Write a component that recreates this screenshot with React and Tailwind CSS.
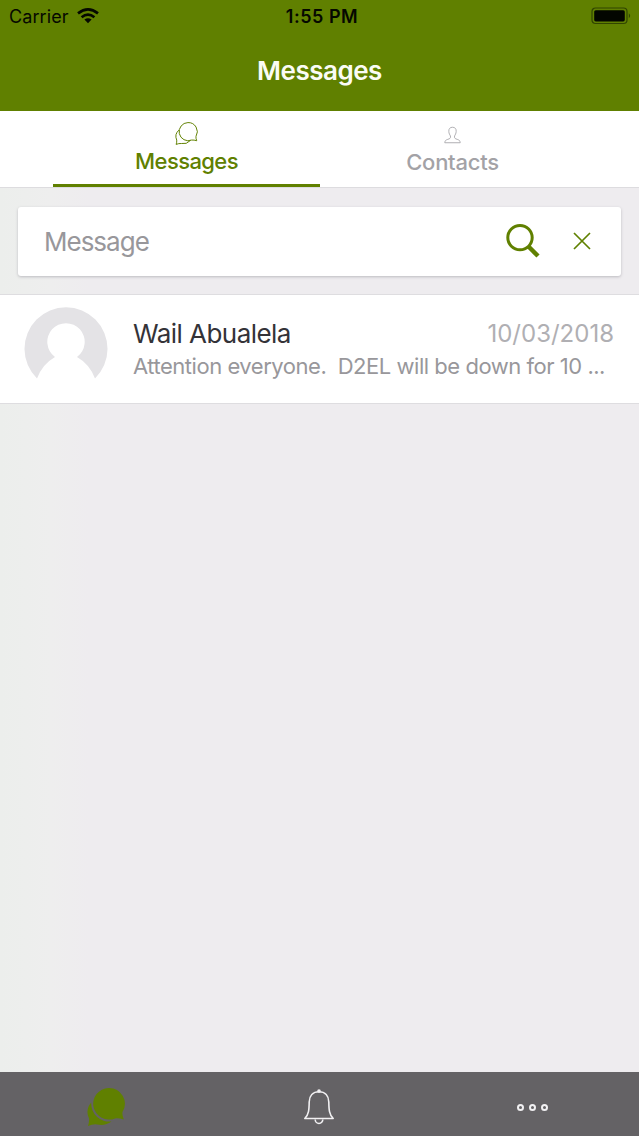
import React, { useState } from "react";

const ChatIcon = ({ filled, className }) => (
  <svg viewBox="0 0 40 40" className={className} fill={filled ? "currentColor" : "none"} stroke={filled ? "none" : "currentColor"} strokeWidth="1.7" strokeLinejoin="round">
    {filled ? (
      <>
        <path d="M22.5 1A15.8 15.8 0 1 0 29 31.4Q33 31 37.8 32.6Q36 28 36.5 25A15.8 15.8 0 0 0 22.5 1Z" />
        <path d="M5.2 15.5A15 15 0 0 0 3 31.5Q3.4 35 2 39Q6.5 37 11 37.4Q19 39.2 25.5 34.4A18 18 0 0 1 5.2 15.5Z" />
      </>
    ) : (
      <>
        <path d="M22.5 1A15.8 15.8 0 1 0 29 31.4Q33 31 37.8 32.6Q36 28 36.5 25A15.8 15.8 0 0 0 22.5 1Z" />
        <path d="M7 14A15 15 0 0 0 3 31.5Q3.4 35 2 39Q6.5 37 11 37.4Q20 39.5 27 32" />
      </>
    )}
  </svg>
);

const PersonIcon = () => (
  <svg viewBox="0 0 18 18" className="mr-px h-[18px] w-[17px]" fill="none" stroke="currentColor" strokeWidth="0.9" strokeLinejoin="round">
    <path d="M9 .8C6.3.8 4.9 2.5 5.1 5.2C5.2 7.6 6.2 8.8 6.8 10C7.4 12.2 6.2 13 4 13.6C1.8 14.3 1.1 15 .8 17.2H17.2C16.9 15 16.2 14.3 14 13.6C11.8 13 10.6 12.2 11.2 10C11.8 8.8 12.8 7.6 12.9 5.2C13.1 2.5 11.7.8 9 .8Z" />
  </svg>
);

const WifiIcon = () => (
  <svg viewBox="0 0 22 16" className="h-4 w-[22px]" fill="none" stroke="currentColor" strokeWidth="2.7">
    <path d="M1 5.4Q11-2.5 21 5.4M4.6 9.2Q11 4.2 17.4 9.2" />
    <path d="M7.4 11.6Q11 8.7 14.6 11.6L11 15.2Z" fill="currentColor" stroke="none" />
  </svg>
);

const BatteryIcon = () => (
  <svg viewBox="0 0 40 18" className="h-[18px] w-10">
    <rect x="1" y="1" width="35" height="15.5" rx="3.5" fill="none" stroke="#314500" strokeWidth="1.2" />
    <rect x="3.2" y="3.2" width="30.6" height="11.2" rx="1.6" fill="#030600" />
    <path d="M37.8 6.3Q40.5 8.8 37.8 11.3Z" fill="#314500" />
  </svg>
);

const BellIcon = () => (
  <svg viewBox="0 0 32 36" className="h-9 w-8" fill="none" stroke="currentColor" strokeWidth="1.6" strokeLinejoin="round">
    <path d="M16 2.7C9.8 2.7 6.3 7 6.2 13C6.1 20.5 5.8 25.5 1.8 29.5H30.2C26.2 25.5 25.9 20.5 25.8 13C25.7 7 22.2 2.7 16 2.7Z" />
    <path d="M12.2 30.4A3.8 4.1 0 0 0 19.8 30.4" />
    <circle cx="16" cy="2.1" r="1.8" fill="currentColor" stroke="none" />
  </svg>
);

const App = () => {
  const [query, setQuery] = useState("");

  return (
    <div className="flex h-[1136px] w-[639px] flex-col overflow-hidden bg-[linear-gradient(90deg,#eceeec_0px,#eeeeee_50px,#eeecef_90px)] font-['Inter',sans-serif]">
      <header className="h-[111px] bg-[#608000] text-[#050800]">
        <div className="grid h-8 grid-cols-3 items-center pr-2 pl-[9px]">
          <div className="flex items-center gap-2">
            <span className="text-[18px] tracking-[0.1px]">Carrier</span>
            <WifiIcon />
          </div>
          <span className="pl-1 text-center text-[18px] font-semibold tracking-[0.5px]">1:55 PM</span>
          <div className="flex justify-end">
            <BatteryIcon />
          </div>
        </div>
        <h1 className="pt-[19px] text-center text-[26px] leading-[40px] font-semibold tracking-[-0.5px] text-[#fbfcf5]">Messages</h1>
      </header>

      <nav className="flex h-[77px] justify-center border-b border-[#dddcdf] bg-white">
        <button className="flex w-[267px] flex-col items-center border-b-[3px] border-[#608000] pt-[11px] text-[#608000]">
          <ChatIcon className="mr-px h-[23px] w-[23px]" />
          <span className="mt-[2px] text-[22px] leading-[28px] font-medium tracking-[-0.6px]">Messages</span>
        </button>
        <button className="flex w-[266px] flex-col items-center pt-[15px] text-[#a3a2a6]">
          <PersonIcon />
          <span className="mt-[3px] pr-px text-[22px] leading-[30px] font-medium tracking-[-0.25px]">Contacts</span>
        </button>
      </nav>

      <div className="h-[106px] px-[18px] pt-[19px]">
        <div className="flex h-[69px] items-center rounded-[3px] bg-white pl-[26px] shadow-[0_1px_3px_#bcbbc0]">
          <input
            type="text"
            placeholder="Message"
            value={query}
            onChange={(e) => setQuery(e.target.value)}
            className="w-[461px] text-[26px] tracking-[-1px] text-[#3c3b3f] outline-none placeholder:text-[#98979b]"
          />
          <button className="pb-[2px] text-[#608000]">
            <svg viewBox="0 0 36 36" className="h-9 w-9" fill="none" stroke="currentColor">
              <circle cx="15" cy="14.6" r="12.2" strokeWidth="3" />
              <path d="M23.5 23.5L33 33" strokeWidth="4.5" />
            </svg>
          </button>
          <button className="ml-8 pb-px text-[#608000]" onClick={() => setQuery("")}>
            <svg viewBox="0 0 18 18" className="h-[18px] w-[18px]" fill="none" stroke="currentColor" strokeWidth="1.7">
              <path d="M1 1L17 17M17 1L1 17" />
            </svg>
          </button>
        </div>
      </div>

      <div className="flex h-[110px] border-y border-[#dedde0] bg-white pt-3 pr-[25px] pl-[24px]">
        <svg viewBox="0 0 84 84" className="h-[84px] w-[84px] shrink-0">
          <path d="M13 71.5A41.5 41.5 0 1 1 71 71.5Q65.5 57 53 50A18.7 18.7 0 1 0 31 50Q18.5 57 13 71.5Z" fill="#e4e3e6" />
        </svg>
        <div className="ml-[25px] min-w-0 flex-1 whitespace-nowrap">
          <div className="flex h-[44px] items-center justify-between pt-[9px]">
            <span className="text-[26px] tracking-[-0.55px] text-[#343338]">Wail Abualela</span>
            <span className="pt-px text-[24px] text-[#b0afb3]">10/03/2018</span>
          </div>
          <p className="text-[22px] leading-[30px] tracking-[-0.47px] whitespace-pre text-[#98979b]">{"Attention everyone.  D2EL will be down for 10 ..."}</p>
        </div>
      </div>

      <footer className="mt-auto grid h-16 grid-cols-3 items-center bg-[#646265] text-[#f1f0f2]">
        <button className="flex justify-center pt-1.5 pr-[2px] text-[#608000]">
          <ChatIcon filled className="h-10 w-10" />
        </button>
        <button className="flex justify-center pt-1.5 pr-px">
          <BellIcon />
        </button>
        <button className="flex justify-center gap-[5px] pt-1.5 pr-px">
          <span className="h-[7px] w-[7px] rounded-full border-2 border-current" />
          <span className="h-[7px] w-[7px] rounded-full border-2 border-current" />
          <span className="h-[7px] w-[7px] rounded-full border-2 border-current" />
        </button>
      </footer>
    </div>
  );
};

export default App;
